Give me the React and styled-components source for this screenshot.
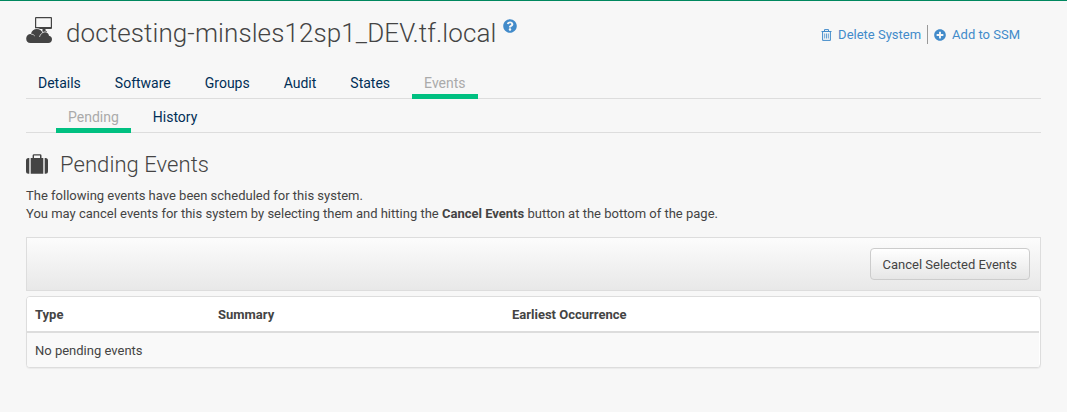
import React from "react";
import styled, { createGlobalStyle, css } from "styled-components";
import { FaQuestionCircle, FaPlusCircle } from "react-icons/fa";

const GlobalStyle = createGlobalStyle`
  *, *::before, *::after { box-sizing: border-box; }
  body {
    margin: 0;
    background: #f7f7f7;
    color: #444;
    font: 13px/18px Roboto, "Liberation Sans", sans-serif;
  }
`;

const Page = styled.main`
  height: 412px;
  padding: 0 26px;
  border-top: 1px solid #00885f;
  overflow: hidden;
`;

const Header = styled.header`
  display: flex;
  align-items: flex-start;
  height: 67px;
`;

const Title = styled.h1`
  display: flex;
  align-items: flex-start;
  flex: 1;
  margin: 0;
  padding-top: 16px;
  font-size: 26px;
  line-height: 32px;
  font-weight: 300;
  letter-spacing: 0.1px;
  white-space: nowrap;
`;

const TitleText = styled.span`
  width: 430px;
  margin: 0 7px 0 14px;
`;

const HelpLink = styled.a`
  display: flex;
  margin-top: 2px;
  color: #428bca;
`;

const Toolbar = styled.nav`
  display: flex;
  align-items: center;
  margin: 24px 21px 0 0;
`;

const ToolLink = styled.a`
  display: flex;
  align-items: center;
  height: 19px;
  line-height: 19px;
  color: #428bca;
  white-space: nowrap;

  svg { margin-right: 6px; }

  & + & {
    margin-left: 6px;
    padding-left: 6px;
    border-left: 1px solid #999;
  }
`;

const TabBar = styled.nav`
  display: flex;
  gap: 10px;
  height: ${(p) => (p.$sub ? 34 : 31)}px;
  padding-left: ${(p) => (p.$sub ? 30 : 0)}px;
  border-bottom: 1px solid #ddd;
`;

const Tab = styled.a`
  height: ${(p) => (p.$sub ? 34 : 31)}px;
  padding: ${(p) => (p.$sub ? 9 : 6)}px 12px 0;
  font-size: 14px;
  line-height: 18px;
  color: #002e56;
  ${(p) =>
    p.$active &&
    css`
      color: #aaa;
      border-bottom: 5px solid #00c081;
    `}
`;

const SectionTitle = styled.h2`
  display: flex;
  align-items: center;
  gap: 12px;
  height: 30px;
  margin: 17px 0 7px;
  font-size: 22px;
  line-height: 30px;
  font-weight: 300;
  letter-spacing: 0.07px;

  svg { margin-bottom: 2px; }
`;

const Intro = styled.p`
  margin: 0;
`;

const ActionBar = styled.div`
  display: flex;
  justify-content: flex-end;
  align-items: center;
  height: 54px;
  margin: 14px 0 5px;
  padding: 0 10px;
  border: 1px solid #ddd;
  background: linear-gradient(#fcfcfc, #e8e8e8);
`;

const Button = styled.button`
  height: 32px;
  padding: 2px 12px 0;
  border: 1px solid #ccc;
  border-radius: 4px;
  background: linear-gradient(#fff, #e6e6e6);
  color: #444;
  font: inherit;
`;

const Panel = styled.div`
  height: 72px;
  padding-right: 1px;
  border: 1px solid #ddd;
  border-radius: 4px;
  background: #fff;
  box-shadow: 0 1px 1px rgba(0, 0, 0, 0.05);
  overflow: hidden;
`;

const Row = styled.div`
  display: grid;
  grid-template-columns: 183px 294px 1fr;
  align-items: center;
  height: 35px;
  padding: 0 8px;
  background: #f9f9f9;
`;

const HeadRow = styled(Row)`
  height: 36px;
  padding-top: 2px;
  background: #fff;
  border-bottom: 2px solid #ddd;
  font-weight: 700;
`;

const SystemIcon = () => (
  <svg width="26" height="27" viewBox="0 0 26 27">
    <path
      fill="#444"
      fillRule="evenodd"
      d="M10 0H25Q26 0 26 1V11Q26 12 25 12H19.5V13.5L21 14.5V15.5H15V14.5L16.5 13.5V12H10Q9 12 9 11V1Q9 0 10 0ZM10.2 1.2V10H24.8V1.2Z"
    />
    <path
      fill="#444"
      stroke="#f7f7f7"
      strokeWidth="1.6"
      paintOrder="stroke"
      d="M4.5 26A4.5 4.5 0 0 1 .2 21.5C.2 18.7 2.3 16.9 4.9 17C5.7 13.8 8 12 10.8 12C13.6 12 15.7 13.6 16.5 16C19.6 14.5 22.7 15.8 23 18.8C24.9 19.3 26 20.6 26 22.3A3.8 3.8 0 0 1 22.2 26Z"
    />
    <path
      fill="none"
      stroke="#f7f7f7"
      strokeWidth="0.7"
      d="M4.9 17Q7.6 17.1 8.8 19M16.5 16Q13.9 17.1 13.5 20"
    />
  </svg>
);

const TrashIcon = () => (
  <svg width="11" height="12" viewBox="0 0 11 12" fill="none" stroke="#428bca">
    <path d="M.5 2.5H10.5M3.5 2V.6H7.5V2M1.6 3V11.4H9.4V3" />
    <path strokeWidth=".8" d="M3.7 4.5V9.5M5.5 4.5V9.5M7.3 4.5V9.5" />
  </svg>
);

const SuitcaseIcon = () => (
  <svg width="22" height="20" viewBox="0 0 22 20" fill="#444">
    <path d="M3.3 4V19.7H2.5Q0 19.7 0 17.2V6.5Q0 4 2.5 4ZM18.7 4H19.5Q22 4 22 6.5V17.2Q22 19.7 19.5 19.7H18.7Z" />
    <path
      fillRule="evenodd"
      d="M4.7 4H6.6V1.5Q6.6 .2 8.1 .2H14Q15.5 .2 15.5 1.5V4H17.3V19.7H4.7ZM8 4H14V1.5H8Z"
    />
  </svg>
);

const mainTabs = ["Details", "Software", "Groups", "Audit", "States", "Events"];
const subTabs = ["Pending", "History"];

export default function App() {
  return (
    <>
      <GlobalStyle />
      <Page>
        <Header>
          <Title>
            <SystemIcon />
            <TitleText>doctesting-minsles12sp1_DEV.tf.local</TitleText>
            <HelpLink>
              <FaQuestionCircle size={14} />
            </HelpLink>
          </Title>
          <Toolbar>
            <ToolLink>
              <TrashIcon />
              Delete System
            </ToolLink>
            <ToolLink>
              <FaPlusCircle size={12} />
              Add to SSM
            </ToolLink>
          </Toolbar>
        </Header>
        <TabBar>
          {mainTabs.map((name) => (
            <Tab key={name} $active={name === "Events"}>{name}</Tab>
          ))}
        </TabBar>
        <TabBar $sub>
          {subTabs.map((name) => (
            <Tab key={name} $sub $active={name === "Pending"}>{name}</Tab>
          ))}
        </TabBar>
        <SectionTitle>
          <SuitcaseIcon />
          Pending Events
        </SectionTitle>
        <Intro>The following events have been scheduled for this system.</Intro>
        <Intro>
          You may cancel events for this system by selecting them and hitting the{" "}
          <strong>Cancel Events</strong> button at the bottom of the page.
        </Intro>
        <ActionBar>
          <Button>Cancel Selected Events</Button>
        </ActionBar>
        <Panel>
          <HeadRow>
            <span>Type</span>
            <span>Summary</span>
            <span>Earliest Occurrence</span>
          </HeadRow>
          <Row>
            <span>No pending events</span>
          </Row>
        </Panel>
      </Page>
    </>
  );
}
